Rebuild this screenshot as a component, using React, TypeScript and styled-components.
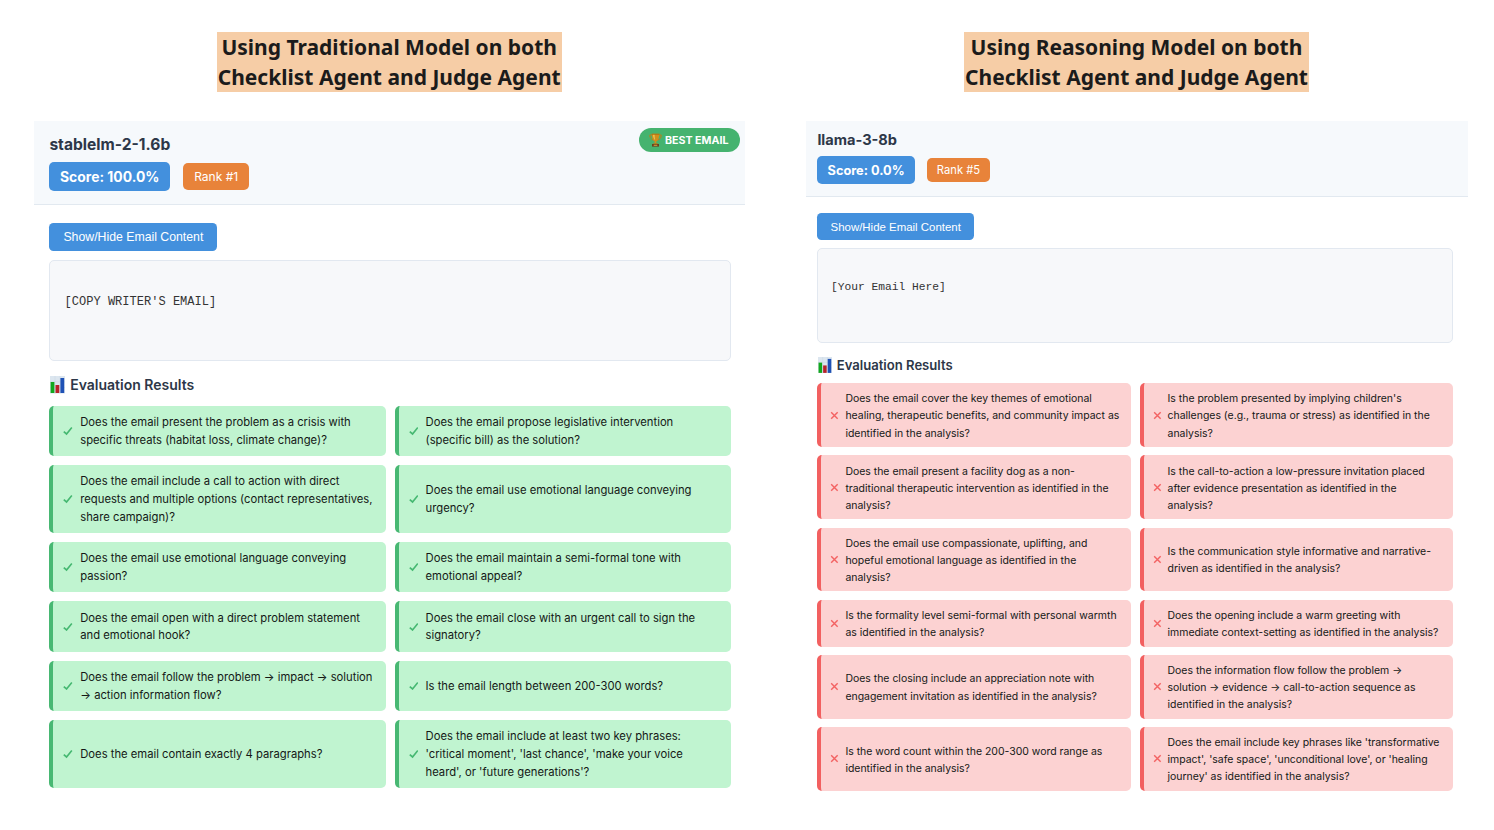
import React from 'react';
import styled, { createGlobalStyle } from 'styled-components';

type Verdict = 'pass' | 'fail';

interface Metrics {
  width: number;
  headerHeight: number;
  headerTop: number;
  padLeft: number;
  padRight: number;
  name: number;
  nameLine: number;
  scoreFont: number;
  scoreW: number;
  scoreH: number;
  badgeGap: number;
  rankFont: number;
  rankW: number;
  rankH: number;
  buttonTop: number;
  buttonFont: number;
  buttonW: number;
  buttonH: number;
  emailTop: number;
  emailH: number;
  emailFont: number;
  emailPadTop: number;
  emailPadLeft: number;
  headingTop: number;
  headingLine: number;
  headingFont: number;
  headingGap: number;
  chartW: number;
  chartH: number;
  gridTop: number;
  gap: number;
  itemFont: number;
  itemLine: number;
  itemPadY: number;
  itemPadLeft: number;
  textDrop: number;
  markSize: number;
  markGap: number;
}

const left: Metrics = {
  width: 711.5, headerHeight: 84, headerTop: 13, padLeft: 15.9, padRight: 14,
  name: 15.6, nameLine: 21, scoreFont: 13.92, scoreW: 120.7, scoreH: 29.2, badgeGap: 13,
  rankFont: 12.02, rankW: 66.2, rankH: 27.6,
  buttonTop: 17.4, buttonFont: 12.29, buttonW: 168, buttonH: 28.2,
  emailTop: 8.8, emailH: 101, emailFont: 12.04, emailPadTop: 33, emailPadLeft: 14.2,
  headingTop: 14, headingLine: 20, headingFont: 14, headingGap: 5,
  chartW: 15, chartH: 17.5, gridTop: 11, gap: 9,
  itemFont: 11.24, itemLine: 17.95, itemPadY: 7.15, itemPadLeft: 10.1,
  textDrop: 1, markSize: 9.6, markGap: 7.2,
};

const right: Metrics = {
  width: 662, headerHeight: 76, headerTop: 9, padLeft: 11.5, padRight: 14.5,
  name: 14.55, nameLine: 20, scoreFont: 12.74, scoreW: 97.4, scoreH: 27.6, badgeGap: 12.2,
  rankFont: 11.2, rankW: 63, rankH: 24.8,
  buttonTop: 15.9, buttonFont: 11.45, buttonW: 156.7, buttonH: 26.4,
  emailTop: 8.2, emailH: 95, emailFont: 11.25, emailPadTop: 30, emailPadLeft: 12.6,
  headingTop: 12.5, headingLine: 19, headingFont: 13.08, headingGap: 4.6,
  chartW: 14, chartH: 16.4, gridTop: 8.8, gap: 8.3,
  itemFont: 10.46, itemLine: 17.1, itemPadY: 6.3, itemPadLeft: 9,
  textDrop: 0.8, markSize: 9, markGap: 6,
};

const passItems: string[][] = [
  ['Does the email present the problem as a crisis with', 'specific threats (habitat loss, climate change)?'],
  ['Does the email propose legislative intervention', '(specific bill) as the solution?'],
  ['Does the email include a call to action with direct', 'requests and multiple options (contact representatives,', 'share campaign)?'],
  ['Does the email use emotional language conveying', 'urgency?'],
  ['Does the email use emotional language conveying', 'passion?'],
  ['Does the email maintain a semi-formal tone with', 'emotional appeal?'],
  ['Does the email open with a direct problem statement', 'and emotional hook?'],
  ['Does the email close with an urgent call to sign the', 'signatory?'],
  ['Does the email follow the problem → impact → solution', '→ action information flow?'],
  ['Is the email length between 200-300 words?'],
  ['Does the email contain exactly 4 paragraphs?'],
  ['Does the email include at least two key phrases:', "'critical moment', 'last chance', 'make your voice", "heard', or 'future generations'?"],
];

const failItems: string[][] = [
  ['Does the email cover the key themes of emotional', 'healing, therapeutic benefits, and community impact as', 'identified in the analysis?'],
  ["Is the problem presented by implying children's", 'challenges (e.g., trauma or stress) as identified in the', 'analysis?'],
  ['Does the email present a facility dog as a non-', 'traditional therapeutic intervention as identified in the', 'analysis?'],
  ['Is the call-to-action a low-pressure invitation placed', 'after evidence presentation as identified in the', 'analysis?'],
  ['Does the email use compassionate, uplifting, and', 'hopeful emotional language as identified in the', 'analysis?'],
  ['Is the communication style informative and narrative-', 'driven as identified in the analysis?'],
  ['Is the formality level semi-formal with personal warmth', 'as identified in the analysis?'],
  ['Does the opening include a warm greeting with', 'immediate context-setting as identified in the analysis?'],
  ['Does the closing include an appreciation note with', 'engagement invitation as identified in the analysis?'],
  ['Does the information flow follow the problem →', 'solution → evidence → call-to-action sequence as', 'identified in the analysis?'],
  ['Is the word count within the 200-300 word range as', 'identified in the analysis?'],
  ["Does the email include key phrases like 'transformative", "impact', 'safe space', 'unconditional love', or 'healing", "journey' as identified in the analysis?"],
];

const GlobalStyle = createGlobalStyle`
  * { box-sizing: border-box; }
  body {
    margin: 0;
    background: #fff;
    font-family: Inter, "Liberation Sans", sans-serif;
    overflow: hidden;
  }
`;

const Page = styled.main`
  display: flex;
  align-items: flex-start;
  gap: 60.9px;
  width: 1494px;
  height: 830px;
  padding: 32.4px 0 0 33.5px;
`;

const Column = styled.section<{ $w: number }>`
  display: flex;
  flex-direction: column;
  flex: none;
  width: ${p => p.$w}px;
`;

const Title = styled.h1<{ $shift: number }>`
  align-self: flex-start;
  width: 345px;
  height: 59.8px;
  margin: 0 0 29.3px ${p => p.$shift}px;
  background: #f6cda6;
  color: #1b1b1b;
  font: 700 21px/30px "Noto Sans", sans-serif;
  text-align: center;
  white-space: nowrap;
`;

const Line = styled.span`
  display: block;
  white-space: nowrap;
`;

const Header = styled.header<{ $m: Metrics }>`
  position: relative;
  height: ${p => p.$m.headerHeight}px;
  padding: ${p => p.$m.headerTop}px ${p => p.$m.padRight}px 0 ${p => p.$m.padLeft}px;
  background: #f6f9fc;
  border-bottom: 1px solid #e2e9f0;
`;

const ModelName = styled.h2<{ $m: Metrics }>`
  margin: 0;
  color: #2d3748;
  font-size: ${p => p.$m.name}px;
  font-weight: 700;
  line-height: ${p => p.$m.nameLine}px;
`;

const Badges = styled.div<{ $m: Metrics }>`
  display: flex;
  align-items: center;
  gap: ${p => p.$m.badgeGap}px;
  margin-top: ${p => (p.$m.nameLine > 20 ? 6.6 : 5.8)}px;
`;

const Pill = styled.span`
  display: flex;
  align-items: center;
  justify-content: center;
  border-radius: 5px;
  color: #fff;
  white-space: nowrap;
`;

const Score = styled(Pill)<{ $m: Metrics }>`
  width: ${p => p.$m.scoreW}px;
  height: ${p => p.$m.scoreH}px;
  background: #4390dd;
  font-size: ${p => p.$m.scoreFont}px;
  font-weight: 700;
`;

const Rank = styled(Pill)<{ $m: Metrics }>`
  width: ${p => p.$m.rankW}px;
  height: ${p => p.$m.rankH}px;
  background: #e8833a;
  font-size: ${p => p.$m.rankFont}px;
`;

const BestBadge = styled.div`
  position: absolute;
  top: 6.6px;
  right: 5px;
  display: flex;
  align-items: center;
  gap: 3px;
  width: 101px;
  height: 24px;
  padding-left: 10px;
  border-radius: 12px;
  background: #45b36f;
  color: #fff;
  font-size: 10.65px;
  font-weight: 700;
  white-space: nowrap;
`;

const Body = styled.div<{ $m: Metrics }>`
  display: flex;
  flex-direction: column;
  padding: ${p => p.$m.buttonTop}px ${p => p.$m.padRight}px 0 ${p => p.$m.padLeft}px;
`;

const ToggleButton = styled.button<{ $m: Metrics }>`
  width: ${p => p.$m.buttonW}px;
  height: ${p => p.$m.buttonH}px;
  padding: 0;
  border: 0;
  border-radius: 4.5px;
  background: #4390dd;
  color: #fff;
  font: ${p => p.$m.buttonFont}px "Liberation Sans", Arial, sans-serif;
  white-space: nowrap;
`;

const EmailBox = styled.pre<{ $m: Metrics }>`
  height: ${p => p.$m.emailH}px;
  margin: ${p => p.$m.emailTop}px 0 0;
  padding: ${p => p.$m.emailPadTop}px 0 0 ${p => p.$m.emailPadLeft}px;
  border: 1px solid #e2e8f0;
  border-radius: 5px;
  background: #f7f8fa;
  color: #333;
  font: ${p => p.$m.emailFont}px/16px "Liberation Mono", "Courier New", monospace;
`;

const Heading = styled.h3<{ $m: Metrics }>`
  display: flex;
  align-items: center;
  gap: ${p => p.$m.headingGap}px;
  height: ${p => p.$m.headingLine}px;
  margin: ${p => p.$m.headingTop}px 0 0;
  padding-left: 0.8px;
  color: #2d3748;
  font-size: ${p => p.$m.headingFont}px;
  font-weight: 600;
`;

const Results = styled.ul<{ $m: Metrics }>`
  display: grid;
  grid-template-columns: 1fr 1fr;
  gap: ${p => p.$m.gap}px;
  margin: ${p => p.$m.gridTop}px 0 0;
  padding: 0;
  list-style: none;
`;

const Item = styled.li<{ $m: Metrics; $verdict: Verdict }>`
  display: flex;
  align-items: center;
  gap: ${p => p.$m.markGap}px;
  min-width: 0;
  padding: ${p => p.$m.itemPadY}px 0 ${p => p.$m.itemPadY}px ${p => p.$m.itemPadLeft}px;
  border-left: 4px solid ${p => (p.$verdict === 'pass' ? '#48b873' : '#f26060')};
  border-radius: 5px;
  background: ${p => (p.$verdict === 'pass' ? '#c0f4d0' : '#fcd2d2')};
  color: #141816;
  font-size: ${p => p.$m.itemFont}px;
  line-height: ${p => p.$m.itemLine}px;
`;

const Question = styled.div<{ $drop: number }>`
  padding-top: ${p => p.$drop}px;
  margin-bottom: -${p => p.$drop}px;
`;

const Svg = styled.svg`
  display: block;
  flex: none;
`;

const Mark = ({ verdict, size }: { verdict: Verdict; size: number }) => (
  <Svg width={size} height={size} viewBox="0 0 10 10" fill="none">
    {verdict === 'pass' ? (
      <path d="M.8 5.8 3.7 8.3 9.2 1.6" stroke="#45b871" strokeWidth="1.7" />
    ) : (
      <path d="M1.3 1.5 8.5 8.7M8.5 1.5 1.3 8.7" stroke="#f36363" strokeWidth="1.6" />
    )}
  </Svg>
);

const ChartIcon = ({ m }: { m: Metrics }) => (
  <Svg width={m.chartW} height={m.chartH} viewBox="0 0 15 17.5">
    <rect width="15" height="17.5" fill="#dce6ef" />
    <path d="M0 5.8h15M0 11.6h15M5 0v17.5M10 0v17.5" stroke="#c9d6e2" strokeWidth=".5" />
    <rect x=".6" y="6" width="3.8" height="11" fill="#12a81e" />
    <rect x="5.5" y="9" width="3.8" height="8" fill="#b8232a" />
    <rect x="10.4" y="2" width="3.8" height="15" fill="#1f51b5" />
  </Svg>
);

const TrophyIcon = () => (
  <Svg width="13" height="14" viewBox="0 0 13 14">
    <path d="M3 2H.8c0 3 1.2 4.6 3.6 5M10 2h2.2c0 3-1.2 4.6-3.6 5" fill="none" stroke="#b9801c" strokeWidth="1" />
    <path d="M2.7.8h7.6c0 4.2-1 6.8-3 7.6V10.5H5.7V8.4C3.7 7.6 2.7 5 2.7.8z" fill="#d08e1c" />
    <path d="M4.2 1.5h1.3c0 2.8.2 4.4.8 5.8C4.8 6.3 4.3 4.2 4.2 1.5z" fill="#f6cf62" />
    <path d="M2.7.8h7.6v.8H2.7z" fill="#a8680f" />
    <path d="M4.5 10.2h4l.8 1H3.7z" fill="#b87914" />
    <path d="M3 11h7v2.6H3z" fill="#6a3f1c" />
    <path d="M4.7 11.7h3.6v1.1H4.7z" fill="#d6a23b" />
  </Svg>
);

interface PanelProps {
  m: Metrics;
  title: string[];
  titleShift: number;
  name: string;
  score: string;
  rank: string;
  email: string;
  items: string[][];
  verdict: Verdict;
  best?: boolean;
}

const Panel = ({ m, title, titleShift, name, score, rank, email, items, verdict, best }: PanelProps) => (
  <Column $w={m.width}>
    <Title $shift={titleShift}>
      {title.map(t => <Line key={t}>{t}</Line>)}
    </Title>
    <Header $m={m}>
      <ModelName $m={m}>{name}</ModelName>
      <Badges $m={m}>
        <Score $m={m}>{score}</Score>
        <Rank $m={m}>{rank}</Rank>
      </Badges>
      {best && <BestBadge><TrophyIcon />BEST EMAIL</BestBadge>}
    </Header>
    <Body $m={m}>
      <ToggleButton $m={m}>Show/Hide Email Content</ToggleButton>
      <EmailBox $m={m}>{email}</EmailBox>
      <Heading $m={m}><ChartIcon m={m} />Evaluation Results</Heading>
      <Results $m={m}>
        {items.map((lines, i) => (
          <Item key={i} $m={m} $verdict={verdict}>
            <Mark verdict={verdict} size={m.markSize} />
            <Question $drop={m.textDrop}>{lines.map(l => <Line key={l}>{l}</Line>)}</Question>
          </Item>
        ))}
      </Results>
    </Body>
  </Column>
);

export default function App() {
  return (
    <>
      <GlobalStyle />
      <Page>
        <Panel
          m={left}
          title={['Using Traditional Model on both', 'Checklist Agent and Judge Agent']}
          titleShift={183.2}
          name="stablelm-2-1.6b"
          score="Score: 100.0%"
          rank="Rank #1"
          email="[COPY WRITER'S EMAIL]"
          items={passItems}
          verdict="pass"
          best
        />
        <Panel
          m={right}
          title={['Using Reasoning Model on both', 'Checklist Agent and Judge Agent']}
          titleShift={158.1}
          name="llama-3-8b"
          score="Score: 0.0%"
          rank="Rank #5"
          email="[Your Email Here]"
          items={failItems}
          verdict="fail"
        />
      </Page>
    </>
  );
}
